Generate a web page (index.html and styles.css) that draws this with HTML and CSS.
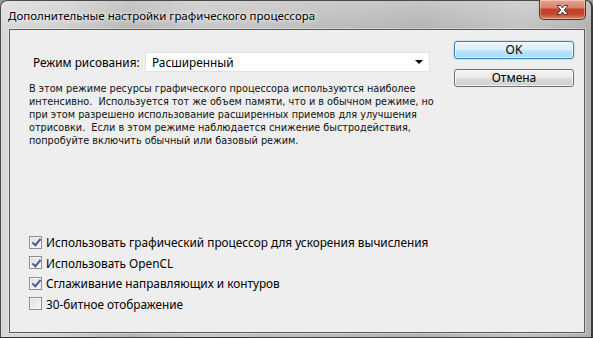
FILE: index.html
```html
<!DOCTYPE html>
<html lang="ru">
<head>
<meta charset="utf-8">
<link rel="stylesheet" href="styles.css">
</head>
<body>
<div class="window">
  <div class="titlebar">
    <span class="title">Дополнительные настройки графического процессора</span>
    <button class="close" aria-label="Закрыть">
      <svg width="17" height="12" viewBox="0 0 17 12">
        <path d="M3 1.5 L6.5 1.5 L8.5 4 L10.5 1.5 L14 1.5 L10.3 6 L14 10.5 L10.5 10.5 L8.5 8 L6.5 10.5 L3 10.5 L6.7 6 Z" fill="#fff" stroke="#4a3a3a" stroke-width="1" stroke-linejoin="round"/>
      </svg>
    </button>
  </div>
  <div class="client">
    <div class="main">
      <div class="mode-row">
        <span class="label">Режим рисования:</span>
        <div class="select"><span>Расширенный</span><span class="arrow"></span></div>
      </div>
      <p class="desc">В этом режиме ресурсы графического процессора используются наиболее<br>интенсивно.&nbsp; Используется тот же объем памяти, что и в обычном режиме, но<br>при этом разрешено использование расширенных приемов для улучшения<br>отрисовки.&nbsp; Если в этом режиме наблюдается снижение быстродействия,<br>попробуйте включить обычный или базовый режим.</p>
      <div class="checks">
        <label class="check"><span class="box on"></span>Использовать графический процессор для ускорения вычисления</label>
        <label class="check"><span class="box on"></span>Использовать OpenCL</label>
        <label class="check"><span class="box on"></span>Сглаживание направляющих и контуров</label>
        <label class="check"><span class="box"></span>30-битное отображение</label>
      </div>
    </div>
    <div class="buttons">
      <button class="btn default">OK</button>
      <button class="btn">Отмена</button>
    </div>
  </div>
</div>
</body>
</html>
```
FILE: styles.css
```css
* { box-sizing: border-box; }
html, body { margin: 0; padding: 0; }
body { width: 593px; height: 338px; overflow: hidden; background: #9a9a9a; }

.window {
  width: 593px;
  height: 338px;
  display: flex;
  flex-direction: column;
  padding: 0 6px 4px 8px;
  border: 1px solid #4a4a4a;
  border-right: 2px solid #3a3a3a;
  border-bottom: 1px solid #3a3a3a;
  border-radius: 7px 7px 0 0;
  background:
    linear-gradient(180deg, rgba(255,255,255,0.25) 0, rgba(255,255,255,0) 30px),
    linear-gradient(90deg, #d8d8d8 0, #cfcfcf 60px, #b5b5b5 130px, #c6c6c6 200px, #bdbdbd 300px, #b3b3b3 420px, #c2c2c2 520px, #b0b0b0 593px);
}

.titlebar {
  height: 28px;
  display: flex;
  justify-content: space-between;
  align-items: flex-start;
  margin-left: -1px;
}
.title {
  font-family: "Noto Sans", sans-serif;
  font-size: 11.5px;
  color: #000;
  margin-top: 7px;
  text-shadow: 0 0 6px rgba(255,255,255,0.9), 0 0 3px rgba(255,255,255,0.8);
}
.close {
  width: 47px;
  height: 20px;
  margin-top: -1px;
  margin-right: -1px;
  padding: 0;
  border: 1px solid #6b2a20;
  border-top: none;
  border-radius: 0 0 5px 5px;
  background: linear-gradient(180deg, #e8a493 0, #d9826c 40%, #c5402a 50%, #c6452e 75%, #de8a6a 100%);
  box-shadow: inset 0 0 0 1px rgba(255,255,255,0.35);
  display: flex;
  align-items: center;
  justify-content: center;
}

.client {
  flex: 1;
  display: flex;
  border: 1px solid #5c5c5c;
  background: #eeeeee;
  box-shadow: 0 0 0 1px rgba(255,255,255,0.35);
  font-family: "Noto Sans", sans-serif;
  font-size: 11.8px;
  color: #000;
}

.main {
  flex: 1;
  display: flex;
  flex-direction: column;
  padding: 22px 0 18px 19px;
}
.mode-row {
  display: flex;
  align-items: center;
  padding-left: 4px;
  height: 20px;
}
.label { flex: none; width: 112px; white-space: nowrap; }
.select {
  width: 285px;
  height: 20px;
  background: #fff;
  border: 1px solid #e2e2e2;
  display: flex;
  align-items: center;
  justify-content: space-between;
  padding: 0 6px 0 6px;
}
.arrow {
  width: 0; height: 0;
  border-left: 4px solid transparent;
  border-right: 4px solid transparent;
  border-top: 4px solid #000;
}

.desc {
  margin: 10px 0 0 0;
  font-family: "DejaVu Sans", sans-serif;
  font-size: 9.7px;
  line-height: 13px;
  color: #111;
}

.checks {
  margin-top: auto;
  display: flex;
  flex-direction: column;
}
.check {
  height: 20.5px;
  display: flex;
  align-items: center;
}
.box {
  width: 13px;
  height: 13px;
  margin-right: 4px;
  border: 1px solid #8e8f8f;
  background: linear-gradient(135deg, #dcdcdc, #fbfbfb);
  box-shadow: inset 0 0 0 1px #f4f4f4;
  position: relative;
}
.box.on::after {
  content: "";
  position: absolute;
  left: 3.5px;
  top: 0.5px;
  width: 3px;
  height: 7px;
  border-right: 2px solid #4a5c9c;
  border-bottom: 2px solid #4a5c9c;
  transform: rotate(40deg);
}

.buttons {
  width: 130px;
  padding: 11px 10px 0 0;
  display: flex;
  flex-direction: column;
  align-items: flex-end;
  gap: 10px;
}
.btn {
  width: 120px;
  height: 18px;
  padding: 0;
  border: 1px solid #707070;
  border-radius: 3px;
  background: linear-gradient(180deg, #f2f2f2 0, #ebebeb 50%, #dddddd 51%, #cfcfcf 100%);
  box-shadow: inset 0 0 0 1px rgba(255,255,255,0.7);
  font-family: "Noto Sans", sans-serif;
  font-size: 12px;
  line-height: 14px;
  color: #000;
}
.btn.default {
  border-color: #3c7fb1;
  background: linear-gradient(180deg, #eaf6fd 0, #d9f0fc 50%, #bee6fd 51%, #a7d9f5 100%);
  box-shadow: inset 0 0 0 1px rgba(255,255,255,0.6), 0 0 2px #7cc6ee;
}
```
